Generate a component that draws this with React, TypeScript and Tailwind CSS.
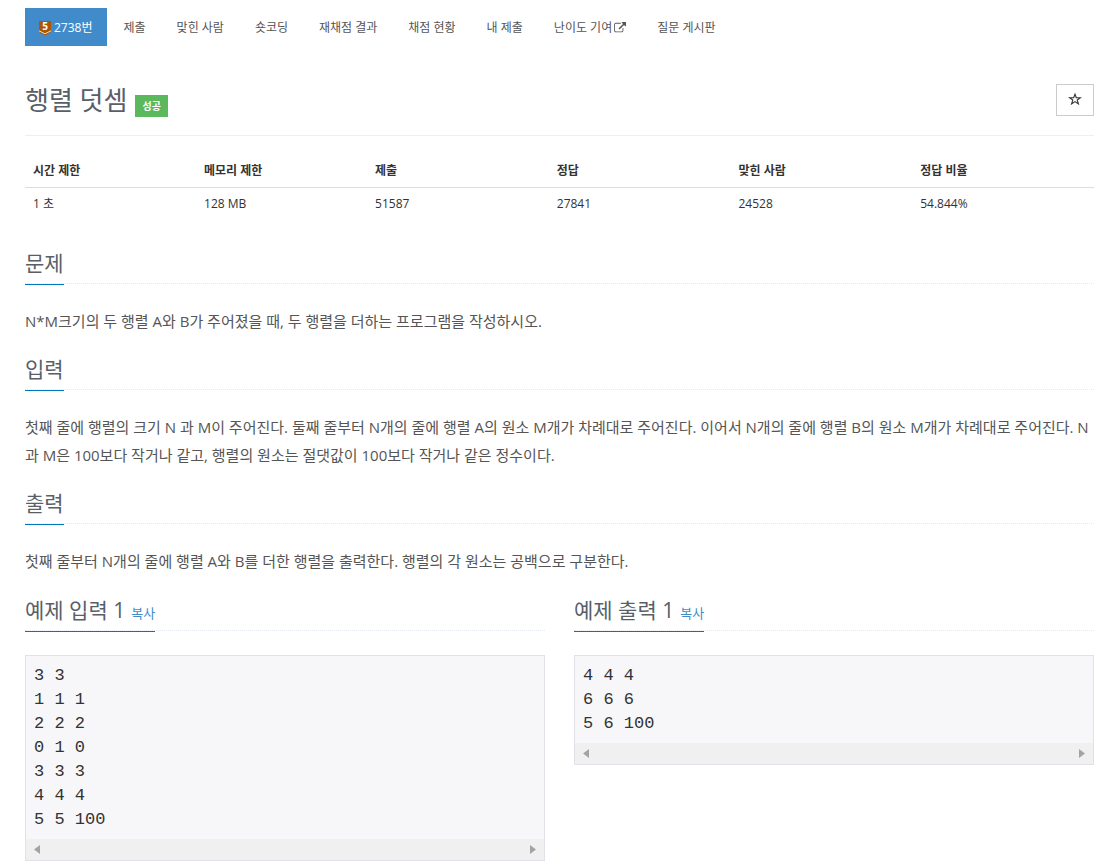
import type { ReactNode } from 'react'

interface NavItem {
  label: string
  external?: boolean
}

const navItems: NavItem[] = [
  { label: '제출' },
  { label: '맞힌 사람' },
  { label: '숏코딩' },
  { label: '재채점 결과' },
  { label: '채점 현황' },
  { label: '내 제출' },
  { label: '난이도 기여', external: true },
  { label: '질문 게시판' },
]

const stats = [
  { label: '시간 제한', value: '1 초', width: 'w-[16%]' },
  { label: '메모리 제한', value: '128 MB', width: 'w-[16%]' },
  { label: '제출', value: '51587', width: 'w-[17%]' },
  { label: '정답', value: '27841', width: 'w-[17%]' },
  { label: '맞힌 사람', value: '24528', width: 'w-[17%]' },
  { label: '정답 비율', value: '54.844%', width: 'w-[17%]' },
]

function TierBadge() {
  return (
    <svg viewBox="0 0 12 15" className="h-[15px] w-3 overflow-visible" aria-hidden="true">
      <path d="M0 0h12v11l-6 3.6L0 11z" fill="#ad5600" />
      <path d="M0 9.8l6 3 6-3" fill="none" stroke="#f3dcc4" strokeWidth="1" />
      <text x="6" y="9.2" textAnchor="middle" fontSize="10" fontWeight="700" fill="#fff">5</text>
    </svg>
  )
}

function ExternalLinkIcon() {
  return (
    <svg viewBox="0 0 1792 1792" className="size-3" fill="currentColor" aria-hidden="true">
      <path d="M1408 928v320q0 119-84.5 203.500t-203.500 84.500h-832q-119 0-203.500-84.500t-84.500-203.500v-832q0-119 84.500-203.500t203.500-84.500h704q14 0 23 9t9 23v64q0 14-9 23t-23 9h-704q-66 0-113 47t-47 113v832q0 66 47 113t113 47h832q66 0 113-47t47-113v-320q0-14 9-23t23-9h64q14 0 23 9t9 23zm384-864v512q0 26-19 45t-45 19-45-19l-176-176-652 652q-10 10-23 10t-23-10l-114-114q-10-10-10-23t10-23l652-652-176-176q-19-19-19-45t19-45 45-19h512q26 0 45 19t19 45z" />
    </svg>
  )
}

function StarIcon() {
  return (
    <svg viewBox="0 0 14 14" className="size-[14px]" fill="none" stroke="currentColor" strokeWidth="1.1" aria-hidden="true">
      <path d="M7 1.200l1.300 3.600H12.400L9.200 7l1.200 3.900L7 8.600l-3.400 2.300L4.800 7 1.600 4.800h4.100z" />
    </svg>
  )
}

function Headline({ children }: { children: ReactNode }) {
  return (
    <div className="flex border-b border-dotted border-[#e4e9f0]">
      <h2 className="-mb-[2px] flex items-baseline border-b border-[#0076bd] pb-[7px] text-[21px] leading-7 text-[#585f69]">
        {children}
      </h2>
    </div>
  )
}

function Section({ title, children }: { title: string; children: ReactNode }) {
  return (
    <section>
      <Headline>{title}</Headline>
      <p className="mt-[23px] text-[15px] leading-7 text-[#555]">{children}</p>
    </section>
  )
}

function Sample({ title, data }: { title: string; data: string }) {
  return (
    <section>
      <Headline>
        {title}
        <button type="button" className="ml-[6px] cursor-pointer text-[13px] leading-4 text-[#428bca]">복사</button>
      </Headline>
      <div className="mt-6 border border-[#e1e1e8] bg-[#f7f7f9]">
        <pre className="overflow-hidden px-2 pt-2 pb-[7px] font-['Liberation_Mono',monospace] text-[17px] leading-6 text-[#333]">
          {data}
        </pre>
        <div className="flex h-[21px] items-center justify-between bg-[#f0f0f0] px-2" aria-hidden="true">
          <svg viewBox="0 0 6 9" className="h-[9px] w-[6px]"><path d="M6 0v9L0 4.500z" fill="#a3a3a3" /></svg>
          <svg viewBox="0 0 6 9" className="h-[9px] w-[6px]"><path d="M0 0v9l6-4.500z" fill="#a3a3a3" /></svg>
        </div>
      </div>
    </section>
  )
}

export default function App() {
  return (
    <main className="bg-white pt-2 pr-6 pb-1 pl-[25px] font-['Open_Sans','Noto_Sans_CJK_KR',sans-serif] text-[#333]">
      <nav className="flex gap-[3px] text-xs text-[#555]">
        <a href="#problem" className="flex h-[38px] items-center gap-[3px] bg-[#428bca] px-[14px] pt-[2px] text-white">
          <TierBadge />
          2738번
        </a>
        {navItems.map(item => (
          <a key={item.label} href="#menu" className="flex h-[38px] items-center gap-[2px] px-[14px] pt-[2px]">
            {item.label}
            {item.external && <ExternalLinkIcon />}
          </a>
        ))}
      </nav>

      {/* Problem title */}
      <header className="mt-8 flex items-start justify-between border-b border-[#eee] pb-[13px]">
        <div className="flex items-center gap-2">
          <h1 className="text-[26px] leading-[44px] text-[#585f69]">행렬 덧셈</h1>
          <span className="mt-3 bg-[#5cb85c] px-[7px] text-[10px] leading-[22px] font-bold text-white">성공</span>
        </div>
        <button
          type="button"
          aria-label="즐겨찾기"
          className="mt-[6px] flex h-8 w-[38px] cursor-pointer items-center justify-center border border-[#ccc]"
        >
          <StarIcon />
        </button>
      </header>

      <table className="mt-[18px] w-full table-fixed text-left text-xs">
        <thead>
          <tr className="border-b border-[#ddd]">
            {stats.map(stat => (
              <th key={stat.label} className={`${stat.width} px-2 py-2 leading-[17px] font-bold`}>{stat.label}</th>
            ))}
          </tr>
        </thead>
        <tbody>
          <tr>
            {stats.map(stat => (
              <td key={stat.label} className="px-2 pt-[7px] pb-[9px] leading-[17px]">{stat.value}</td>
            ))}
          </tr>
        </tbody>
      </table>

      <div className="mt-7 flex flex-col gap-5">
        <Section title="문제">
          N*M크기의 두 행렬 A와 B가 주어졌을 때, 두 행렬을 더하는 프로그램을 작성하시오.
        </Section>
        <Section title="입력">
          첫째 줄에 행렬의 크기 N 과 M이 주어진다. 둘째 줄부터 N개의 줄에 행렬 A의 원소 M개가 차례대로 주어진다. 이어서 N개의 줄에 행렬 B의 원소 M개가 차례대로 주어진다. N과 M은 100보다 작거나 같고, 행렬의 원소는 절댓값이 100보다 작거나 같은 정수이다.
        </Section>
        <Section title="출력">
          첫째 줄부터 N개의 줄에 행렬 A와 B를 더한 행렬을 출력한다. 행렬의 각 원소는 공백으로 구분한다.
        </Section>
      </div>

      <div className="mt-[21px] grid grid-cols-2 items-start gap-[29px]">
        <Sample title="예제 입력 1" data={'3 3\n1 1 1\n2 2 2\n0 1 0\n3 3 3\n4 4 4\n5 5 100'} />
        <Sample title="예제 출력 1" data={'4 4 4\n6 6 6\n5 6 100'} />
      </div>
    </main>
  )
}
